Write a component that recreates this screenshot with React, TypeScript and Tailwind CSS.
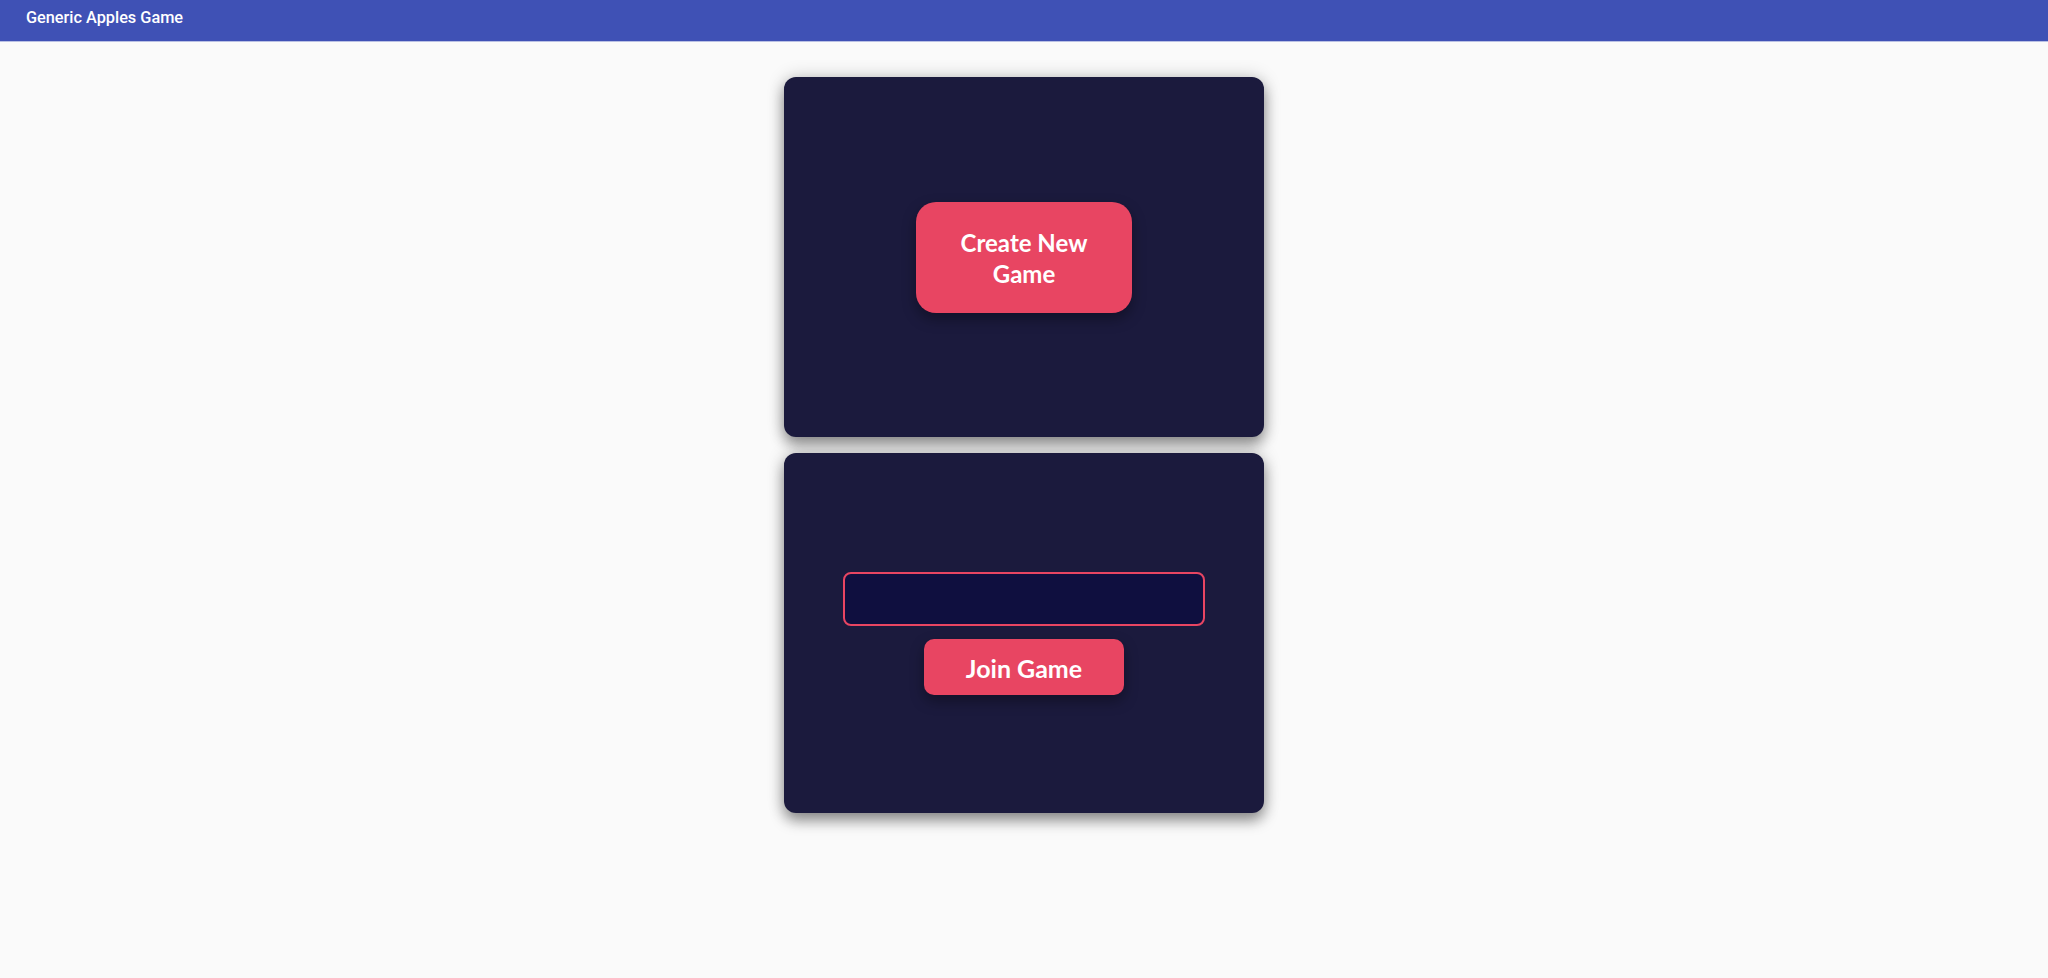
export default function App() {
  const card =
    "w-[480px] h-[360px] rounded-[12px] bg-[#1b1a3d] shadow-[0_8px_14px_rgba(0,0,0,0.38),0_0_18px_rgba(0,0,0,0.2)]";
  return (
    <div className="min-h-[978px] bg-[#fafafa]">
      <header className="h-[42px] bg-[#3f51b5] border-b border-[#b9c0e4] pl-[26px] pt-[5px]">
        <span className="text-white text-[16.3px] font-medium leading-[24px] font-['Roboto',sans-serif]">Generic Apples Game</span>
      </header>
      <main className="flex flex-col items-center gap-4 pt-[35px] font-['Lato',sans-serif]">
        <section className={`${card} flex items-center justify-center`}>
          <button className="w-[216px] h-[111px] rounded-[20px] bg-[#e84562] text-white font-bold text-[24px] leading-[31px] pt-[2px] px-8 shadow-[0_6px_14px_rgba(0,0,0,0.35)]">
            Create New Game
          </button>
        </section>
        <section className={`${card} flex flex-col items-center justify-center gap-[13px]`}>
          <input className="w-[362px] h-[54px] rounded-[8px] border-2 border-[#e84562] bg-[#0f0f3f] outline-none text-white px-3" />
          <button className="w-[200px] h-[56px] rounded-[10px] bg-[#e84562] text-white font-bold text-[25px] leading-[30px] pt-[2px] shadow-[0_6px_14px_rgba(0,0,0,0.35)]">
            Join Game
          </button>
        </section>
      </main>
    </div>
  );
}
